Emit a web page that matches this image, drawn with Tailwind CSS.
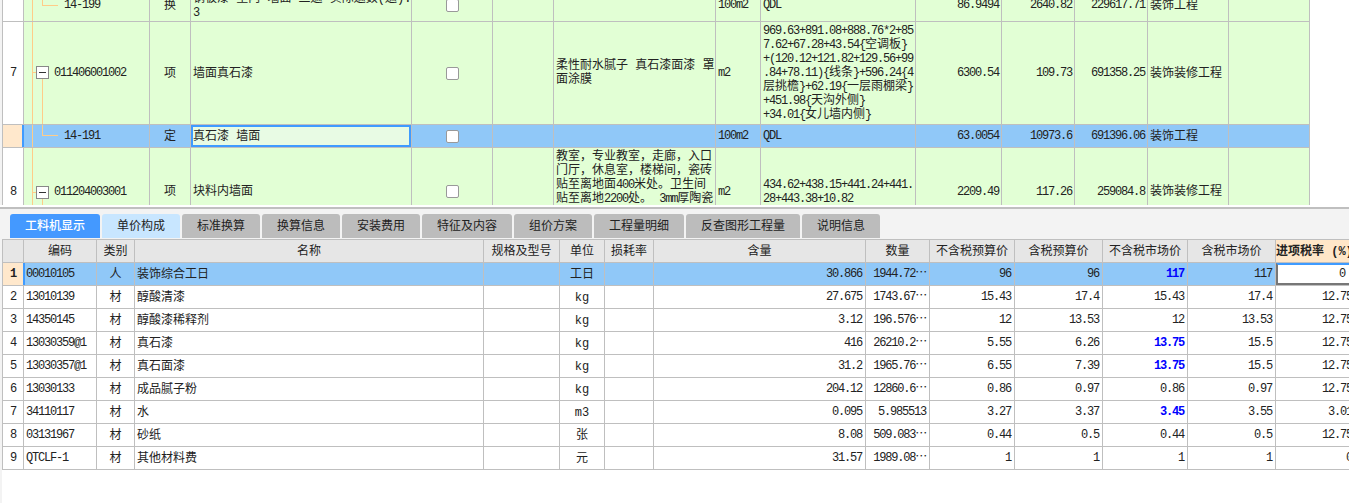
<!doctype html>
<html lang="zh">
<head>
<meta charset="utf-8">
<title>工料机显示</title>
<script src="https://cdn.jsdelivr.net/npm/@tailwindcss/browser@4"></script>
</head>
<body class="w-[1349px] h-[503px] overflow-hidden bg-white text-[#222] font-['Liberation_Mono','Noto_Sans_CJK_SC',monospace] text-[12px] leading-[14px]">
<div class="flex flex-col h-[503px]">

  <!-- upper grid: scrolled so the first row is cut off -->
  <div class="h-[205px] overflow-hidden border-l-2 border-[#f3f3f3]">
    <table class="table-fixed w-[1307px] -mt-[12px] bg-[#e2ffd5] [&_td]:border [&_td]:border-[#bfbfbf] [&_td]:p-0 [&_td]:px-[2px] [&_td:nth-child(1)]:bg-white [&_td:nth-child(1)]:text-center [&_td:nth-child(1)]:tracking-[-1.2px] [&_td:nth-child(2)]:relative [&_td:nth-child(2)]:tracking-[-1.2px] [&_td:nth-child(3)]:text-center [&_td:nth-child(3)]:pt-px [&_td:nth-child(4)]:pt-px [&_td:nth-child(8)]:tracking-[-1.2px] [&_td:nth-child(9)]:tracking-[-1.2px] [&_td:nth-child(10)]:text-right [&_td:nth-child(10)]:tracking-[-1.2px] [&_td:nth-child(11)]:text-right [&_td:nth-child(11)]:tracking-[-1.2px] [&_td:nth-child(12)]:text-right [&_td:nth-child(12)]:tracking-[-1.2px] [&_td:nth-child(13)]:pt-px">
      <colgroup>
        <col class="w-[21px]"><col class="w-[126px]"><col class="w-[41px]"><col class="w-[221px]"><col class="w-[81px]"><col class="w-[61px]"><col class="w-[162px]"><col class="w-[45px]"><col class="w-[155px]"><col class="w-[86px]"><col class="w-[73px]"><col class="w-[73px]"><col class="w-[81px]"><col class="w-[81px]">
      </colgroup>
      <tbody>
        <tr class="h-[33px]">
          <td></td>
          <td>
            <div class="absolute left-[8px] top-0 bottom-0 w-px bg-[#ffcc88]"></div>
            <div class="absolute left-[18px] top-0 h-[17px] w-px bg-[#ffcc88]"></div>
            <div class="absolute left-[18px] top-[16px] w-[16px] h-px bg-[#ffcc88]"></div>
            <span class="pl-[38px]">14-199</span>
          </td>
          <td>换</td>
          <td class="whitespace-nowrap">钢板漆 室内 墙面 二遍 实际遍数(遍):<br>3</td>
          <td><div class="w-[13px] h-[13px] mx-auto bg-white border border-[#999] rounded-[2px]"></div></td>
          <td></td>
          <td></td>
          <td>100m2</td>
          <td>QDL</td>
          <td>86.9494</td>
          <td>2640.82</td>
          <td>229617.71</td>
          <td>装饰工程</td>
          <td></td>
        </tr>
        <tr class="h-[103px]">
          <td>7</td>
          <td>
            <div class="absolute left-[8px] top-0 bottom-0 w-px bg-[#ffcc88]"></div>
            <div class="absolute left-[8px] top-[50px] w-[4px] h-px bg-[#ffcc88]"></div>
            <div class="absolute left-[18px] top-[56px] bottom-0 w-px bg-[#ffcc88]"></div>
            <div class="absolute left-[12px] top-[44px] w-[13px] h-[13px] bg-white border border-[#888] flex items-center justify-center"><div class="w-[7px] h-px bg-[#333]"></div></div>
            <span class="pl-[28px]">011406001002</span>
          </td>
          <td>项</td>
          <td>墙面真石漆</td>
          <td><div class="w-[13px] h-[13px] mx-auto bg-white border border-[#999] rounded-[2px]"></div></td>
          <td></td>
          <td class="whitespace-nowrap">柔性耐水腻子 真石漆面漆 罩<br>面涂膜</td>
          <td>m2</td>
          <td class="whitespace-nowrap">969.63+891.08+888.76*2+85<br>7.62+67.28+43.54{<span class="tracking-normal">空调板</span>}<br>+(120.12+121.82+129.56+99<br>.84+78.11){<span class="tracking-normal">线条</span>}+596.24{4<br><span class="tracking-normal">层挑檐</span>}+62.19{<span class="tracking-normal">一层雨棚梁</span>}<br>+451.98{<span class="tracking-normal">天沟外侧</span>}<br>+34.01{<span class="tracking-normal">女儿墙内侧</span>}</td>
          <td>6300.54</td>
          <td>109.73</td>
          <td>691358.25</td>
          <td>装饰装修工程</td>
          <td></td>
        </tr>
        <tr class="h-[23px] bg-[#90c8f8]">
          <td class="!bg-[#ffe8cc]"></td>
          <td>
            <div class="absolute -left-[2px] top-0 bottom-0 w-[2px] bg-[#3f9bff]"></div>
            <div class="absolute left-[8px] top-0 bottom-0 w-px bg-[#ffcc88]"></div>
            <div class="absolute left-[18px] top-0 h-[11px] w-px bg-[#ffcc88]"></div>
            <div class="absolute left-[18px] top-[10px] w-[16px] h-px bg-[#ffcc88]"></div>
            <span class="pl-[38px]">14-191</span>
          </td>
          <td>定</td>
          <td class="relative bg-[#e8fbe4]">真石漆 墙面<div class="absolute inset-0 border-2 border-[#3f9bff]"></div></td>
          <td><div class="w-[13px] h-[13px] mx-auto bg-white border border-[#999] rounded-[2px]"></div></td>
          <td></td>
          <td></td>
          <td>100m2</td>
          <td>QDL</td>
          <td>63.0054</td>
          <td>10973.6</td>
          <td>691396.06</td>
          <td>装饰工程</td>
          <td></td>
        </tr>
        <tr class="h-[88px]">
          <td>8</td>
          <td>
            <div class="absolute left-[8px] top-0 bottom-0 w-px bg-[#ffcc88]"></div>
            <div class="absolute left-[8px] top-[44px] w-[4px] h-px bg-[#ffcc88]"></div>
            <div class="absolute left-[18px] top-[50px] bottom-0 w-px bg-[#ffcc88]"></div>
            <div class="absolute left-[12px] top-[38px] w-[13px] h-[13px] bg-white border border-[#888] flex items-center justify-center"><div class="w-[7px] h-px bg-[#333]"></div></div>
            <span class="pl-[28px]">011204003001</span>
          </td>
          <td>项</td>
          <td>块料内墙面</td>
          <td><div class="w-[13px] h-[13px] mx-auto bg-white border border-[#999] rounded-[2px]"></div></td>
          <td></td>
          <td class="whitespace-nowrap align-top !pt-[2px]">教室，专业教室，走廊，入口<br>门厅，休息室，楼梯间，瓷砖<br>贴至离地面<span class="tracking-[-1.2px]">400</span>米处。卫生间<br>贴至离地<span class="tracking-[-1.2px]">2200</span>处。 <span class="tracking-[-1.2px]">3mm</span>厚陶瓷</td>
          <td>m2</td>
          <td class="whitespace-nowrap">434.62+438.15+441.24+441.<br>28+443.38+10.82</td>
          <td>2209.49</td>
          <td>117.26</td>
          <td>259084.8</td>
          <td>装饰装修工程</td>
          <td></td>
        </tr>
      </tbody>
    </table>
  </div>

  <!-- tab strip -->
  <div class="mt-[2px] border-t-2 border-[#bfbfbf] h-[32px] bg-[#f3f3f3] flex items-end gap-[2px] pl-[10px] pb-px">
    <div class="w-[90px] h-[24px] pt-[2px] rounded-t-[3px] bg-[#4499ff] text-white font-medium flex items-center justify-center">工料机显示</div>
    <div class="w-[78px] h-[24px] pt-[2px] rounded-t-[3px] bg-[#c8e6ff] flex items-center justify-center">单价构成</div>
    <div class="w-[78px] h-[24px] pt-[2px] rounded-t-[3px] bg-[#bcbcbc] flex items-center justify-center">标准换算</div>
    <div class="w-[78px] h-[24px] pt-[2px] rounded-t-[3px] bg-[#bcbcbc] flex items-center justify-center">换算信息</div>
    <div class="w-[78px] h-[24px] pt-[2px] rounded-t-[3px] bg-[#bcbcbc] flex items-center justify-center">安装费用</div>
    <div class="w-[90px] h-[24px] pt-[2px] rounded-t-[3px] bg-[#bcbcbc] flex items-center justify-center">特征及内容</div>
    <div class="w-[78px] h-[24px] pt-[2px] rounded-t-[3px] bg-[#bcbcbc] flex items-center justify-center">组价方案</div>
    <div class="w-[90px] h-[24px] pt-[2px] rounded-t-[3px] bg-[#bcbcbc] flex items-center justify-center">工程量明细</div>
    <div class="w-[114px] h-[24px] pt-[2px] rounded-t-[3px] bg-[#bcbcbc] flex items-center justify-center">反查图形工程量</div>
    <div class="w-[78px] h-[24px] pt-[2px] rounded-t-[3px] bg-[#bcbcbc] flex items-center justify-center">说明信息</div>
  </div>

  <!-- lower grid -->
  <div class="flex-1 overflow-hidden border-l-2 border-[#f3f3f3]">
    <table class="table-fixed w-[1353px] [&_th]:border [&_th]:border-[#bfbfbf] [&_th]:bg-[#e6e6e6] [&_th]:font-normal [&_th]:p-0 [&_th]:pt-[2px] [&_td]:border [&_td]:border-[#bfbfbf] [&_td]:p-0 [&_td]:px-[2px] [&_td]:text-right [&_td]:tracking-[-1.2px] [&_td:nth-child(1)]:text-center [&_td:nth-child(2)]:text-left [&_td:nth-child(2)]:relative [&_td:nth-child(3)]:text-center [&_td:nth-child(3)]:tracking-normal [&_td:nth-child(3)]:pt-px [&_td:nth-child(4)]:text-left [&_td:nth-child(4)]:tracking-normal [&_td:nth-child(4)]:pt-px [&_td:nth-child(6)]:text-center [&_td:nth-child(6)]:tracking-normal [&_td:nth-child(6)]:pt-px [&_td:nth-child(n+8)]:pr-[3px]">
      <colgroup>
        <col class="w-[21px]"><col class="w-[73px]"><col class="w-[38px]"><col class="w-[349px]"><col class="w-[76px]"><col class="w-[45px]"><col class="w-[49px]"><col class="w-[212px]"><col class="w-[64px]"><col class="w-[85px]"><col class="w-[88px]"><col class="w-[85px]"><col class="w-[88px]"><col class="w-[80px]">
      </colgroup>
      <thead>
        <tr class="h-[23px]">
          <th></th><th>编码</th><th>类别</th><th>名称</th><th>规格及型号</th><th>单位</th><th>损耗率</th><th>含量</th><th>数量</th><th>不含税预算价</th><th>含税预算价</th><th>不含税市场价</th><th>含税市场价</th>
          <th class="!bg-[#ffe6c8] !font-bold text-left pl-[2px] whitespace-nowrap">进项税率 (%)</th>
        </tr>
      </thead>
      <tbody class="[&_tr]:h-[23px]">
        <tr class="bg-[#90c8f8]">
          <td class="!bg-[#ffe8cc] font-bold">1</td>
          <td><div class="absolute -left-[1px] top-0 bottom-0 w-[2px] bg-[#3f9bff]"></div>00010105</td>
          <td>人</td><td>装饰综合工日</td><td></td><td>工日</td><td></td>
          <td>30.866</td><td>1944.72⋯</td><td>96</td><td>96</td>
          <td class="font-bold text-[#0000ff]">117</td><td>117</td>
          <td class="relative bg-white !pr-[10px]">0<div class="absolute inset-0 border-2 border-t-[#3f9bff] border-l-[#777] border-b-[#777] border-r-transparent"></div></td>
        </tr>
        <tr>
          <td>2</td><td>13010139</td><td>材</td><td>醇酸清漆</td><td></td><td>kg</td><td></td>
          <td>27.675</td><td>1743.67⋯</td><td>15.43</td><td>17.4</td><td>15.43</td><td>17.4</td><td>12.75</td>
        </tr>
        <tr>
          <td>3</td><td>14350145</td><td>材</td><td>醇酸漆稀释剂</td><td></td><td>kg</td><td></td>
          <td>3.12</td><td>196.576⋯</td><td>12</td><td>13.53</td><td>12</td><td>13.53</td><td>12.75</td>
        </tr>
        <tr>
          <td>4</td><td>13030359@1</td><td>材</td><td>真石漆</td><td></td><td>kg</td><td></td>
          <td>416</td><td>26210.2⋯</td><td>5.55</td><td>6.26</td><td class="font-bold text-[#0000ff]">13.75</td><td>15.5</td><td>12.75</td>
        </tr>
        <tr>
          <td>5</td><td>13030357@1</td><td>材</td><td>真石面漆</td><td></td><td>kg</td><td></td>
          <td>31.2</td><td>1965.76⋯</td><td>6.55</td><td>7.39</td><td class="font-bold text-[#0000ff]">13.75</td><td>15.5</td><td>12.75</td>
        </tr>
        <tr>
          <td>6</td><td>13030133</td><td>材</td><td>成品腻子粉</td><td></td><td>kg</td><td></td>
          <td>204.12</td><td>12860.6⋯</td><td>0.86</td><td>0.97</td><td>0.86</td><td>0.97</td><td>12.75</td>
        </tr>
        <tr>
          <td>7</td><td>34110117</td><td>材</td><td>水</td><td></td><td>m3</td><td></td>
          <td>0.095</td><td>5.985513</td><td>3.27</td><td>3.37</td><td class="font-bold text-[#0000ff]">3.45</td><td>3.55</td><td>3.01</td>
        </tr>
        <tr>
          <td>8</td><td>03131967</td><td>材</td><td>砂纸</td><td></td><td>张</td><td></td>
          <td>8.08</td><td>509.083⋯</td><td>0.44</td><td>0.5</td><td>0.44</td><td>0.5</td><td>12.75</td>
        </tr>
        <tr>
          <td>9</td><td>QTCLF-1</td><td>材</td><td>其他材料费</td><td></td><td>元</td><td></td>
          <td>31.57</td><td>1989.08⋯</td><td>1</td><td>1</td><td>1</td><td>1</td><td>0</td>
        </tr>
      </tbody>
    </table>
  </div>
</div>
</body>
</html>
